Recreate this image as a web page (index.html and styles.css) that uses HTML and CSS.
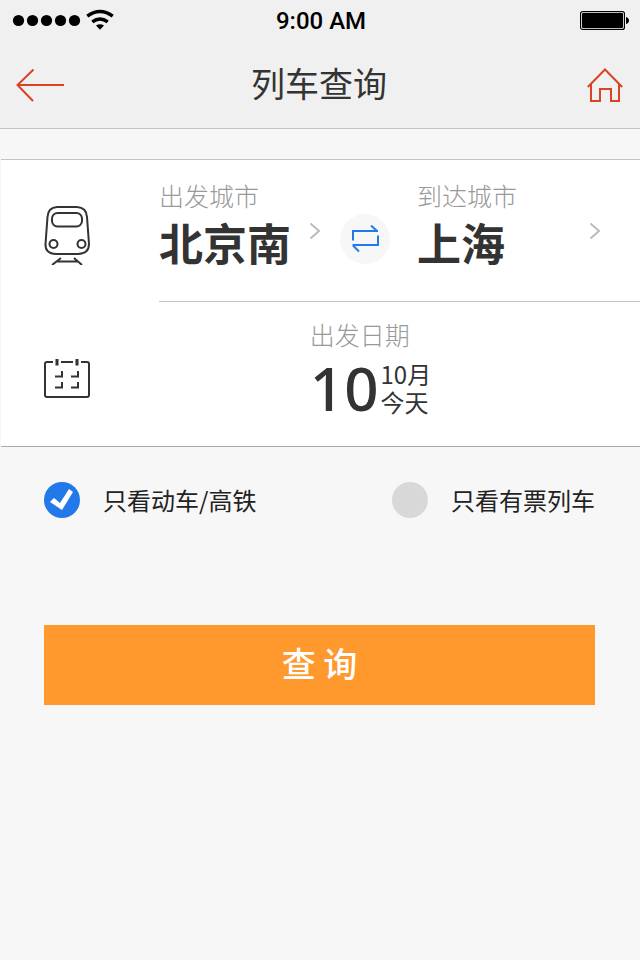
FILE: index.html
```html
<!DOCTYPE html>
<html lang="zh-CN">
<head>
<meta charset="utf-8">
<meta name="viewport" content="width=device-width, initial-scale=1">
<title>列车查询</title>
<link rel="stylesheet" href="styles.css">
</head>
<body>
<header class="header">
  <div class="status">
    <svg class="signal" width="104" height="22" viewBox="0 0 104 22" aria-hidden="true">
      <circle cx="6.500" cy="11.500" r="5.600"/><circle cx="20.500" cy="11.500" r="5.600"/><circle cx="34.500" cy="11.500" r="5.600"/><circle cx="48.500" cy="11.500" r="5.600"/><circle cx="62.500" cy="11.500" r="5.600"/>
      <path d="M75.300 7.100Q88 -2.300 100.700 7.100M80.300 12.900Q88 6.900 95.700 12.900" fill="none" stroke="#000" stroke-width="3.400"/>
      <path d="M84 16.500Q88 14.100 92 16.500L88 20.800Z"/>
    </svg>
    <span class="time">9:00 AM</span>
    <svg class="battery" width="50" height="20" viewBox="0 0 50 20" aria-hidden="true">
      <rect x="0.600" y="1.600" width="43.800" height="17.800" rx="2" fill="#fff" stroke="#000" stroke-width="1.200"/>
      <rect x="2" y="3" width="41" height="15" rx="1"/>
      <path d="M46 7Q49 8 49 10.500T46 14Z"/>
    </svg>
  </div>
  <nav class="bar">
    <a class="nav-link" href="#back" aria-label="返回">
      <svg width="50" height="34" viewBox="0 0 50 34" aria-hidden="true"><path d="M18.500 1.500 2.500 17 18 33M2.500 17H49"/></svg>
    </a>
    <h1 class="title">列车查询</h1>
    <a class="nav-link nav-home" href="#home" aria-label="首页">
      <svg width="36" height="36" viewBox="0 0 36 36" aria-hidden="true"><path d="M.800 20 18 2.500 35.200 20M4 17V34H13V22H24V34H32V17"/></svg>
    </a>
  </nav>
</header>

<main>
  <form class="search">
    <div class="card">
      <div class="row">
        <svg class="row-icon" width="48" height="60" viewBox="0 0 48 60" aria-hidden="true">
          <path d="M13 2H33Q42.500 2.500 43 12L45 39Q45 48.500 34 49H12Q1 48.500 1.500 39L3.500 12Q4 2.500 13 2Z"/>
          <rect x="8" y="8" width="30" height="13.500" rx="5.500"/>
          <circle cx="9.500" cy="39" r="4"/><circle cx="37.500" cy="39" r="4"/>
          <path d="M17 53 8 60M30 53 38 60M13 56.500H34"/>
        </svg>
        <div class="route">
          <button class="city" type="button">
            <span class="city-text"><span class="label">出发城市</span><span class="city-name">北京南</span></span>
            <svg class="chevron" width="12" height="18" viewBox="0 0 12 18" aria-hidden="true"><path d="M1.500 1.500 10 9 1.500 16.500"/></svg>
          </button>
          <button class="swap" type="button" aria-label="交换城市">
            <svg width="28" height="28" viewBox="0 0 28 28" aria-hidden="true"><path d="M2 15.500V6H27M20 .500 26.500 6.500M27 10.500V20H1.500M8 26.500 2 20.500"/></svg>
          </button>
          <button class="city" type="button">
            <span class="city-text"><span class="label">到达城市</span><span class="city-name">上海</span></span>
            <svg class="chevron" width="12" height="18" viewBox="0 0 12 18" aria-hidden="true"><path d="M1.500 1.500 10 9 1.500 16.500"/></svg>
          </button>
        </div>
      </div>
      <div class="row">
        <svg class="row-icon" width="48" height="42" viewBox="0 0 48 42" aria-hidden="true">
          <path d="M9 5H3Q1 5 1 7V38Q1 40 3 40H43Q45 40 45 38V7Q45 5 43 5H37M17 5H29"/>
          <path class="rings" d="M13 2V8.500M33 2V8.500"/>
          <path d="M11 19.500H18V14M27 19.500H34V14M11 30.500H18V25M27 30.500H34V25"/>
        </svg>
        <button class="date" type="button">
          <span class="date-text">
            <span class="label">出发日期</span>
            <span class="date-value">
              <span class="day">10</span>
              <span class="date-side"><span>10月</span><span>今天</span></span>
            </span>
          </span>
        </button>
      </div>
    </div>

    <div class="options">
      <label class="option"><input class="check" type="checkbox" checked>只看动车/高铁</label>
      <label class="option"><input class="check" type="checkbox">只看有票列车</label>
    </div>

    <button class="submit" type="submit">查 询</button>
  </form>
</main>
</body>
</html>
```

FILE: styles.css
```css
* {
  box-sizing: border-box;
}

body {
  margin: 0;
  background: #f7f7f7;
  color: #333;
  font-family: "Noto Sans CJK SC", sans-serif;
}

button {
  margin: 0;
  padding: 0;
  border: 0;
  background: none;
  color: inherit;
  font: inherit;
  text-align: left;
  cursor: pointer;
}

svg {
  display: block;
  flex: none;
}

/* Header */
.header {
  background: #f0f0f0;
  border-bottom: 1px solid #c4c4c4;
}

.status {
  display: grid;
  grid-template-columns: 1fr auto 1fr;
  align-items: center;
  height: 40px;
  padding: 0 10px 0 12px;
}

.time {
  padding-top: 2px;
  color: #000;
  font: 500 24px/28px Roboto, sans-serif;
}

.battery {
  justify-self: end;
}

.bar {
  display: grid;
  grid-template-columns: 1fr auto 1fr;
  align-items: center;
  height: 88px;
  padding: 0 17px 0 15px;
}

.nav-link {
  padding-top: 2px;
}

.nav-link svg {
  fill: none;
  stroke: #d94424;
  stroke-width: 2;
}

.nav-home {
  justify-self: end;
}

.title {
  margin: 0;
  padding-bottom: 2px;
  font-size: 34px;
  font-weight: 400;
  line-height: 48px;
}

/* Search card */
.card {
  margin: 30px 0 0 1px;
  background: #fff;
  border-top: 1px solid #c4c4c4;
  border-bottom: 1px solid #aaa;
}

.row {
  display: grid;
  grid-template-columns: 115px 1fr;
  align-items: center;
  padding-left: 43px;
}

.row-icon {
  margin-top: 8px;
  fill: none;
  stroke: #333;
  stroke-width: 2;
}

.row-icon .rings {
  stroke-width: 3;
}

.route {
  display: grid;
  grid-template-columns: 181fr 50px 250fr;
  align-items: center;
  border-bottom: 1px solid #c4c4c4;
}

.city {
  display: flex;
  align-items: center;
  justify-content: space-between;
  padding-right: 19px;
}

.swap + .city {
  padding-left: 27px;
  padding-right: 39px;
}

.city-text,
.date-text {
  display: flex;
  flex-direction: column;
}

.city-text {
  padding: 15px 0 32px;
}

.label {
  color: #999;
  font-size: 25px;
  font-weight: 300;
  line-height: 40px;
}

.city-name {
  font-size: 44px;
  font-weight: 700;
  line-height: 54px;
}

.chevron {
  fill: none;
  stroke: #bbb;
  stroke-width: 2;
}

.swap {
  display: grid;
  place-items: center;
  width: 50px;
  height: 50px;
  margin-top: 16px;
  border-radius: 50%;
  background: #f7f7f7;
}

.swap svg {
  fill: none;
  stroke: #2378ea;
  stroke-width: 2;
}

/* Date */
.date {
  display: flex;
  justify-content: center;
  padding: 12px 58px 24px 0;
}

.date-value {
  display: flex;
  align-items: center;
  gap: 2px;
  height: 68px;
}

.day {
  font-family: "Noto Sans", sans-serif;
  font-size: 60px;
  font-weight: 500;
  line-height: 68px;
}

.date-side {
  display: flex;
  flex-direction: column;
  font-size: 24px;
  line-height: 28px;
}

/* Filters */
.options {
  display: flex;
  justify-content: space-between;
  padding: 34px 45px 0 44px;
}

.option {
  display: flex;
  align-items: center;
  gap: 23px;
  color: #222;
  font-size: 24px;
  line-height: 38px;
}

.check {
  appearance: none;
  width: 36px;
  height: 36px;
  margin: 0;
  border-radius: 50%;
  background: #d8d8d8;
}

.check:checked {
  background: #2378ea;
}

.check:checked::before {
  content: "";
  display: block;
  width: 36px;
  height: 36px;
  background: #fff;
  clip-path: polygon(6px 20px, 10px 16px, 16px 21px, 25px 7px, 29px 10px, 18px 28px);
}

.submit {
  display: block;
  width: calc(100% - 89px);
  margin: 106px 45px 0 44px;
  padding: 14px 0 18px;
  background: #ff992d;
  color: #fff;
  font-size: 34px;
  font-weight: 500;
  line-height: 48px;
  text-align: center;
}
```
